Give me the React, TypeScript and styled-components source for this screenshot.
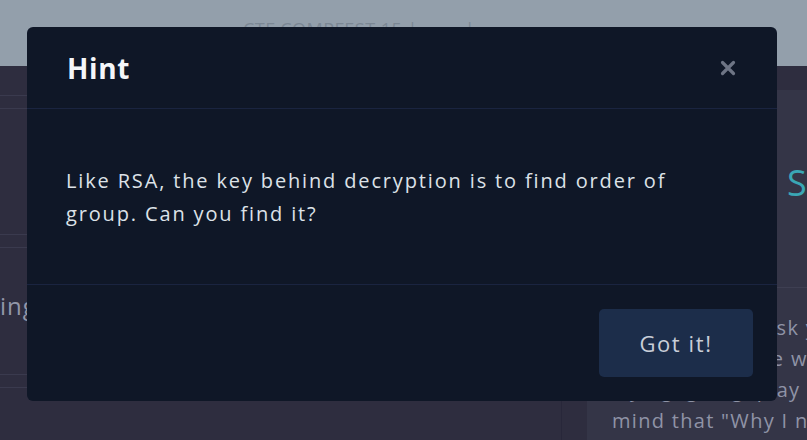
import React from "react";
import styled, { createGlobalStyle } from "styled-components";

const Global = createGlobalStyle`
  html, body { margin: 0; padding: 0; }
  body {
    width: 807px;
    height: 440px;
    overflow: hidden;
    background: #2e2d3f;
    font-family: "Open Sans", "Noto Sans", sans-serif;
  }
`;

const Page = styled.div`
  position: relative;
  width: 807px;
  height: 440px;
  overflow: hidden;
`;

const NavBar = styled.header`
  height: 66px;
  background: #939fab;
  display: flex;
  align-items: flex-start;
  padding-left: 243px;
  box-sizing: border-box;
  padding-top: 17px;
  color: #7b8794;
  font-size: 18px;
  letter-spacing: 0.5px;
`;

const Main = styled.main`
  display: flex;
  height: 374px;
`;

const LeftCol = styled.section`
  flex: none;
  width: 562px;
  display: flex;
  flex-direction: column;
  border-right: 1px solid #28273a;
  box-sizing: border-box;
`;

const Row = styled.div<{ $h: number }>`
  height: ${(p) => p.$h}px;
  flex: none;
  border-bottom: 1px solid #3a3a4e;
  display: flex;
  align-items: center;
  color: #9296a8;
  font-size: 24px;
  box-sizing: border-box;
  padding-bottom: 12px;
`;

const RowText = styled.span<{ $shift?: number }>`
  margin-left: ${(p) => p.$shift ?? 0}px;
  letter-spacing: 1px;
`;

const RightCol = styled.aside`
  flex: 1;
  min-width: 0;
  overflow: hidden;
  padding: 24px 0 0 25px;
  display: flex;
`;

const Card = styled.div`
  flex: 1;
  min-width: 0;
  background: #343547;
  display: flex;
  flex-direction: column;
`;

const CardHead = styled.div`
  height: 198px;
  border-bottom: 1px solid #3e3f52;
  display: flex;
  align-items: center;
  padding-left: 200px;
  color: #3aa7b5;
  font-size: 36px;
  padding-bottom: 12px;
  box-sizing: border-box;
`;

const CardBody = styled.div`
  padding: 24px 0 0 25px;
  color: #8f93a6;
  font-size: 20px;
  line-height: 31px;
  letter-spacing: 1.3px;
  white-space: nowrap;
`;

const Overlay = styled.div`
  position: absolute;
  inset: 0;
  padding: 27px 30px 39px 27px;
  display: flex;
  align-items: flex-start;
`;

const Dialog = styled.div`
  width: 750px;
  height: 374px;
  background: #0f1727;
  border-radius: 6px;
  display: flex;
  flex-direction: column;
  color: #dfe3ea;
`;

const DialogHeader = styled.div`
  height: 82px;
  box-sizing: border-box;
  border-bottom: 1px solid #1a2440;
  display: flex;
  align-items: center;
  justify-content: space-between;
  padding: 0 40px 0 40px;
`;

const Title = styled.h2`
  margin: 0;
  font-size: 28px;
  font-weight: 700;
  color: #f4f6f9;
  letter-spacing: 0.6px;
`;

const Close = styled.button`
  background: none;
  border: none;
  padding: 0;
  width: 18px;
  height: 18px;
  display: flex;
  align-items: center;
  justify-content: center;
  cursor: pointer;
`;

const DialogBody = styled.div`
  height: 176px;
  box-sizing: border-box;
  border-bottom: 1px solid #1a2440;
  padding: 55px 30px 0 39px;
  font-size: 20px;
  line-height: 33px;
  letter-spacing: 1.85px;
  color: #dde2e8;
  white-space: nowrap;
`;

const DialogFooter = styled.div`
  flex: 1;
  display: flex;
  justify-content: flex-end;
  align-items: flex-start;
  padding: 24px 24px 0 0;
`;

const GotIt = styled.button`
  width: 154px;
  height: 68px;
  border: none;
  border-radius: 5px;
  background: #1c2d4a;
  color: #c9ced8;
  font-family: inherit;
  font-size: 22px;
  letter-spacing: 1.6px;
  cursor: pointer;
`;

export default function App() {
  return (
    <>
      <Global />
      <Page>
        <NavBar>CTF COMPFEST 15 | ... ... |</NavBar>
        <Main>
          <LeftCol>
            <Row $h={30} />
            <Row $h={13} />
            <Row $h={126} />
            <Row $h={13} />
            <Row $h={127}>
              <RowText $shift={0}>ing</RowText>
            </Row>
            <Row $h={13} />
          </LeftCol>
          <RightCol>
            <Card>
              <CardHead>S</CardHead>
              <CardBody>
                Hey, I want to ask you
                <br />
                Probably, all the way
                <br />
                trying, going, play enough
                <br />
                mind that "Why I need
              </CardBody>
            </Card>
          </RightCol>
        </Main>
        <Overlay>
          <Dialog>
            <DialogHeader>
              <Title>Hint</Title>
              <Close aria-label="Close">
                <svg width="16" height="16" viewBox="0 0 16 16">
                  <path
                    d="M2.5 2.5 L13.5 13.5 M13.5 2.5 L2.5 13.5"
                    stroke="#6e7585"
                    strokeWidth="3.2"
                    strokeLinecap="round"
                  />
                </svg>
              </Close>
            </DialogHeader>
            <DialogBody>
              Like RSA, the key behind decryption is to find order of
              <br />
              group. Can you find it?
            </DialogBody>
            <DialogFooter>
              <GotIt>Got it!</GotIt>
            </DialogFooter>
          </Dialog>
        </Overlay>
      </Page>
    </>
  );
}
